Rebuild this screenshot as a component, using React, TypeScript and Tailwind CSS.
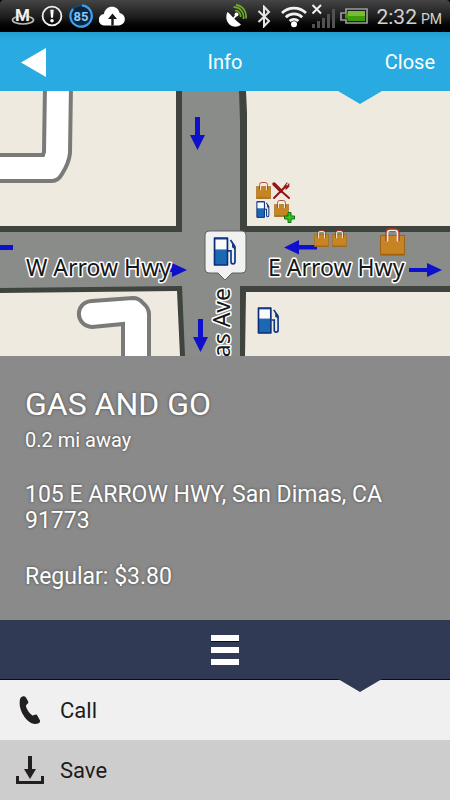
import type { ReactNode } from "react";

function StatusBar() {
  return (
    <div className="flex h-8 items-center justify-between rounded-t-sm bg-linear-to-b from-[#454545] via-[#1c1c1c] via-55% to-black pl-[11px] pr-2">
      <div className="flex items-center gap-[6px]">
        <svg className="h-6 w-6" viewBox="0 0 24 24" aria-hidden="true">
          <ellipse cx="12" cy="16" rx="10.5" ry="4" fill="none" stroke="#b9b9b9" strokeWidth="1.7" />
          <text x="11.5" y="17" textAnchor="middle" fontSize="17" fontWeight="700" fill="#f2f2f2" stroke="#222" strokeWidth="0.6" paintOrder="stroke" className="font-[Roboto,sans-serif]">M</text>
        </svg>
        <svg className="h-[22px] w-[22px]" viewBox="0 0 22 22" aria-hidden="true">
          <circle cx="11" cy="11" r="9.4" fill="none" stroke="#f0f0f0" strokeWidth="1.8" />
          <path d="M9.3 4.8h3.4l-.7 8h-2z" fill="#fff" />
          <circle cx="11" cy="15.7" r="1.8" fill="#fff" />
        </svg>
        <svg className="h-6 w-6" viewBox="3 0 24 24" aria-hidden="true">
          <circle cx="15" cy="12" r="10.7" fill="#0b2740" stroke="#1c466b" strokeWidth="1.8" />
          <path d="M16 1.3A10.7 10.7 0 1 1 7 5" fill="none" stroke="#3ea0ef" strokeWidth="2.2" />
          <text x="15" y="16.5" textAnchor="middle" fontSize="13" fontWeight="700" fill="#8cc8f8" className="font-[Roboto,sans-serif]">85</text>
        </svg>
        <svg className="h-5 w-[26px]" viewBox="0 0 26 20" aria-hidden="true">
          <path d="M6 19.5A5.7 5.7 0 0 1 5 8C5.5 3.500 9 .8 13 .8c4 0 6.800 2.500 7.600 6.200A6.300 6.300 0 0 1 20 19.500z" fill="#fff" />
          <path d="M13.500 7.500 18 13h-3.300v6.500h-2.400V13H9z" fill="#181818" />
        </svg>
      </div>
      <div className="flex items-center gap-1">
        <svg className="mr-[6px] h-6 w-[22px]" viewBox="0 0 22 24" aria-hidden="true">
          <path d="M2.500 8C4 9 6 11 8.500 14c2.500 2.500 5 4.500 7.500 6.500-3 3-8 3-11.500 0C1 17 .5 12 2.500 8z" fill="#fff" />
          <path d="m8 15 3.500-4" stroke="#fff" strokeWidth="1.800" />
          <circle cx="11.500" cy="10.500" r="2" fill="#fff" />
          <path d="M10 6.500a5.500 5.500 0 0 1 5.500 6.500M8.500 3.200C14.500 2.500 19.500 8 18.500 15M11 .8C17.500 1.500 22 7.500 21 14.500" fill="none" stroke="#6fae24" strokeWidth="1.700" />
        </svg>
        <svg className="mr-[6px] h-[23px] w-[14px]" viewBox="0 0 14 23" aria-hidden="true">
          <path d="M1.500 6 12 16l-5 5.300V1.700L12 7 1.500 17" fill="none" stroke="#e6e6e6" strokeWidth="2" />
        </svg>
        <svg className="h-[23px] w-[26px]" viewBox="0 0 26 23" aria-hidden="true">
          <g fill="none" stroke="#f2f2f2" strokeWidth="2.700">
            <path d="M1 8a17 17 0 0 1 24 0" />
            <path d="M4.800 12.200a11.700 11.700 0 0 1 16.400 0" />
            <path d="M8.600 16a6.500 6.500 0 0 1 8.800 0" />
          </g>
          <circle cx="13" cy="19.300" r="3" fill="#fff" />
        </svg>
        <svg className="h-6 w-[25px]" viewBox="0 0 25 24" aria-hidden="true">
          <path d="M1 20h3v4H1zM6 17h3v7H6zM11 14h3v10h-3zM16 10h3v14h-3zM21 5h3v19h-3z" fill="#525252" />
          <path d="m1.500 1 8.500 8.500M10 1 1.500 9.500" stroke="#f2f2f2" strokeWidth="2" />
        </svg>
        <svg className="mr-1 h-4 w-7" viewBox="0 0 28 16" aria-hidden="true">
          <path d="M6 1h21v14H6v-3H1V5h5z" fill="#1d1d1d" stroke="#9c9c9c" strokeWidth="1.700" />
          <path d="M7.500 3H25v10H7.500v-2.500H5v-5h2.500z" fill="#409b0a" />
          <path d="M8 3h17v5H8z" fill="#75bd36" />
        </svg>
        <span className="flex items-baseline gap-1 pt-px font-[Roboto,sans-serif] text-[21px] leading-8 text-[#d2d2d2]">
          2:32 <span className="text-sm">PM</span>
        </span>
      </div>
    </div>
  );
}

function Notch({ className }: { className: string }) {
  return (
    <svg className={`absolute left-4/5 top-full h-[13px] w-11 -translate-x-1/2 ${className}`} viewBox="0 0 44 13" aria-hidden="true">
      <path d="M0 0h44L22 13z" fill="currentColor" />
    </svg>
  );
}

function Fuel({ x, y, w, h }: { x: number; y: number; w: number; h: number }) {
  return (
    <svg x={x} y={y} width={w} height={h} viewBox="0 0 24 28" preserveAspectRatio="none">
      <path d="M1.500 1h13v26h-13z" fill="#1c69b3" stroke="#0b2a78" strokeWidth="1.600" strokeLinejoin="round" />
      <path d="M2.500 2.500h11V12h-11z" fill="#fafafa" />
      <path d="M15 13.500h3V24q0 2 2 2t2-2V9.500L17.500 3" fill="none" stroke="#0f3787" strokeWidth="1.700" />
      <path d="M19 5v5l3 2V8z" fill="#123b86" />
    </svg>
  );
}

function Bag({ x, y, w, h }: { x: number; y: number; w: number; h: number }) {
  return (
    <svg x={x} y={y} width={w} height={h} viewBox="0 0 25 28" preserveAspectRatio="none">
      <path d="M.5 7.500h24V27H.5z" fill="#c78423" stroke="#9a641c" />
      <path d="M1 26.500h23" stroke="#a35f10" strokeWidth="1.500" />
      <path d="M6.200 13V4q0-3 3-3h6.600q3 0 3 3v9" fill="none" stroke="#a43a20" strokeWidth="1.600" />
      <path d="M7.500 13.500V5q0-2.500 2.500-2.500h5q2.500 0 2.500 2.500v8.500" fill="none" stroke="#f4e9dc" strokeWidth="1.600" />
    </svg>
  );
}

function StreetMap() {
  const label = "font-['Noto_Sans',sans-serif] text-[23px]";
  return (
    <svg className="block h-[265px] w-full" viewBox="0 91 450 265" preserveAspectRatio="xMidYMid slice" role="img" aria-label="Street map">
      <path d="M0 91h450v265H0z" fill="#3f443f" />
      <g fill="#8a8c89">
        <path d="M182 91h57l1 30v235h-55l-3-70z" />
        <path d="M0 232h450v54H182L0 288z" />
      </g>
      <g fill="#eeeadf">
        <path d="M0 91h176v135H0z" />
        <path d="m246 91 1 22v113h203V91z" />
        <path d="m0 293 177-2 3 65H0z" />
        <path d="M246 292h204v64H245z" />
      </g>
      <g fill="#fff" stroke="#7a7b78" strokeWidth="4">
        <path d="m45 85-1 67-1 3H-5v26h57q6 0 10-7 7-11 8-21l1-68z" />
        <path d="M123 360v-36l-31 3c-17-1-18-25 0-26l41-3q6 0 10 5 6 5 6 11v46z" />
      </g>
      <g fill="#0f10cc">
        <path d="M195 117h5v18h5l-7.500 15-7.500-15h5z" />
        <path d="M198 319h5v18h5l-7.500 15-7.500-15h5z" />
        <path d="M0 245h13v5H0z" />
        <path d="M157 268h15v-5l15 7-15 7v-5h-15z" />
        <path d="M409 268h18v-5l15 7-15 7v-5h-18z" />
        <path d="M317 245h-18v-5l-15 7.500 15 7v-5h18z" />
      </g>
      <Bag x={256} y={182} w={15} h={17} />
      <g fill="none" stroke="#8f1714" strokeLinecap="round">
        <path d="m274 184 7 7" strokeWidth="3.500" />
        <path d="m280 190 9 8M274 198l12-12" strokeWidth="2" />
        <path d="m284 187 3-4M286 189l3-3M286 188l3-4" strokeWidth="1.200" />
      </g>
      <Fuel x={256} y={201} w={14} h={17} />
      <Bag x={274} y={200} w={15} h={17} />
      <path d="M288 212.500h3v3.500h3.500v3H291v3.500h-3V219h-3.500v-3h3.500z" fill="#35c522" stroke="#126d12" />
      <Bag x={314} y={230} w={15} h={17} />
      <Bag x={332} y={230} w={15} h={17} />
      <Bag x={380} y={228} w={25} h={28} />
      <Fuel x={257} y={307} w={23} h={27} />
      <g fill="#161616" stroke="#fff" strokeWidth="3" strokeLinejoin="round" paintOrder="stroke">
        <text x="26" y="276" className={label}>W Arrow Hwy</text>
        <text x="268" y="276" className={label}>E Arrow Hwy</text>
        <text transform="translate(230 288) rotate(-90)" textAnchor="end" className={label}>as Ave</text>
      </g>
      <path d="M209 231h33q4 0 4 4v34q0 4-4 4h-10l-7 7-7-7h-9q-4 0-4-4v-34q0-4 4-4z" fill="#f1f1f1" stroke="#5f605f" />
      <Fuel x={213} y={237} w={24} h={29} />
    </svg>
  );
}

function ActionRow({ icon, children, tone }: { icon: ReactNode; children: ReactNode; tone: string }) {
  return (
    <button type="button" className={`flex h-[60px] w-full items-center gap-4 pl-4 text-left text-[22px] text-[#1c1c1c] ${tone}`}>
      {icon}
      {children}
    </button>
  );
}

export default function App() {
  return (
    <div className="min-h-screen bg-black font-[Roboto,sans-serif]">
      <StatusBar />
      <header className="relative grid h-[59px] grid-cols-3 items-center bg-linear-to-b from-[#229fd2] to-[#29abe2] to-15% px-[15px] pt-px text-xl text-white">
        <button type="button" aria-label="Back" className="justify-self-start pl-[6px]">
          <svg className="h-[29px] w-[25px]" viewBox="0 0 25 29" aria-hidden="true">
            <path d="M0 14.500 25 0v29z" fill="#fff" />
          </svg>
        </button>
        <h1 className="text-center">Info</h1>
        <button type="button" className="justify-self-end">Close</button>
        <Notch className="text-[#29abe2]" />
      </header>
      <StreetMap />
      <main className="min-h-[264px] bg-[#8a8a8a] px-[25px] pt-7 text-[23px] leading-[26px] text-white text-shadow-[0_0_3px_#00000080]">
        <h2 className="text-[32px] leading-10">GAS AND GO</h2>
        <p className="text-xl leading-8">0.2 mi away</p>
        <p className="mt-[26px]">105 E ARROW HWY, San Dimas, CA 91773</p>
        <p className="mt-[30px]">Regular: $3.80</p>
      </main>
      <nav className="relative flex h-[60px] items-center justify-center border-b border-[#050a35] bg-[#303a55]">
        <button type="button" aria-label="Menu" className="flex flex-col gap-[6px]">
          <span className="h-[6px] w-7 bg-white shadow-[0_1px_0_#050a35]" />
          <span className="h-[6px] w-7 bg-white" />
          <span className="h-[6px] w-7 bg-white" />
        </button>
        <Notch className="text-[#303a55]" />
      </nav>
      <ActionRow
        tone="bg-[#f0f0f0]"
        icon={
          <svg className="h-7 w-7" viewBox="0 0 28 28" aria-hidden="true">
            <path d="M4.500 2C6 0 8.500-.5 9.800 1.200l2.400 4.300c.8 1.700-1.900 2.800-2.200 3.900-.4 2.500 4 9 6.500 10 1.300.3 2.800-1.500 4.500-.5l2.500 4.500c1 1.700.8 2.800-.8 3.800-3 1.400-7 1-10.500-2.200C7 20.500 4 13.500 3.700 8.500 3.600 5.500 3.800 3.500 4.500 2z" fill="#231f20" />
          </svg>
        }
      >
        Call
      </ActionRow>
      <ActionRow
        tone="bg-[#cdcdcd]"
        icon={
          <svg className="h-7 w-7" viewBox="0 0 28 28" aria-hidden="true">
            <path d="M12 0h4v13h4l-6 10-6-10h4z" fill="#231f20" />
            <path d="M1.500 20v6.500h25V20" fill="none" stroke="#231f20" strokeWidth="3" />
          </svg>
        }
      >
        Save
      </ActionRow>
    </div>
  );
}
